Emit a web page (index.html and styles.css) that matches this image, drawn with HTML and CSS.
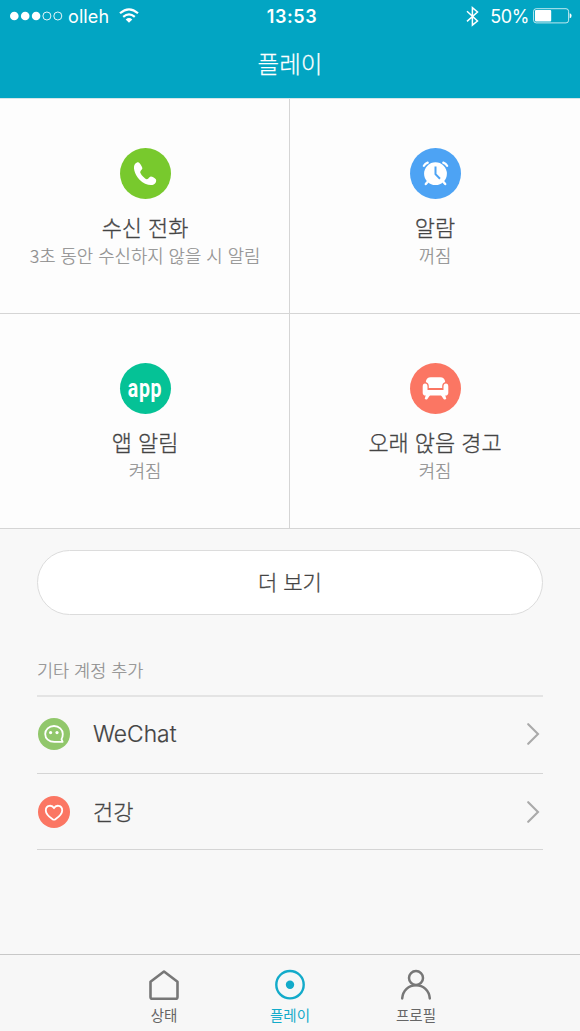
FILE: index.html
```html
<!DOCTYPE html>
<html lang="ko">
<head>
<meta charset="utf-8">
<title>플레이</title>
<link rel="stylesheet" href="styles.css">
</head>
<body>
<div class="app">
  <header class="header">
    <div class="status">
      <div class="status-left">
        <svg class="signal" width="53" height="10" viewBox="0 0 53 10"><g fill="#fff"><circle cx="4.3" cy="5" r="4.3"/><circle cx="15.2" cy="5" r="4.3"/><circle cx="26.1" cy="5" r="4.3"/></g><g fill="none" stroke="#fff" stroke-width=".9"><circle cx="36.9" cy="5" r="4"/><circle cx="47.8" cy="5" r="4"/></g></svg>
        <span class="carrier">olleh</span>
        <svg class="wifi" width="20" height="16" viewBox="0 0 20 16"><g fill="none" stroke="#fff" stroke-width="2.2"><path d="M1 5.3Q10 -2.7 19 5.3"/><path d="M4.2 8.9Q10 3.9 15.8 8.9"/></g><path d="M6.7 11.4Q10 8.6 13.3 11.4L10 14.7Z" fill="#fff"/></svg>
      </div>
      <span class="time">13:53</span>
      <div class="status-right">
        <svg width="13" height="21" viewBox="0 0 13 21"><path d="M1 5.3L11.5 15 6.4 19.2V1.7L11.5 6 1 15.4" fill="none" stroke="#fff" stroke-width="1.5"/></svg>
        <span class="percent">50%</span>
        <svg class="battery" width="39" height="16" viewBox="0 0 39 16"><rect x=".6" y=".7" width="35" height="14.2" rx="2.6" fill="none" stroke="#fff" stroke-opacity=".75"/><rect x="2" y="2.1" width="16.2" height="11.4" rx="1" fill="#fff"/><path d="M36.7 5.3Q38.6 5.6 38.6 7.8T36.7 10.3Z" fill="#fff"/></svg>
      </div>
    </div>
    <h1 class="title">플레이</h1>
  </header>

  <main class="content">
    <section class="tiles">
      <div class="tile">
        <svg class="tile-icon" viewBox="0 0 51 51"><circle cx="25.5" cy="25.5" r="25.5" fill="#78c92d"/><path d="M15 16C16.2 14.7 17.5 14.2 18.6 14.4C19.8 14.8 22 18.3 22.4 20.1C22.6 21.5 20.2 22.4 20.2 24.2C20.4 26.2 24.6 30.7 26.8 31.2C28.6 31.4 29.3 28.5 30.8 28.5C32.4 28.6 35.2 30.3 36 31.6C36.6 33.2 35.8 35.4 33.7 36.5C30.5 38 24 36.4 19.3 31.5C14.1 25.8 12.8 18.7 15 16Z" fill="#fff"/></svg>
        <h2 class="tile-title">수신 전화</h2>
        <p class="tile-note">3초 동안 수신하지 않을 시 알림</p>
      </div>
      <div class="tile">
        <svg class="tile-icon" viewBox="0 0 51 51"><circle cx="25.5" cy="25.5" r="25.5" fill="#4da3f4"/><g stroke="#fff" fill="none" stroke-linecap="round"><path d="M17.5 34L15.8 36M33.5 34L35.2 36" stroke-width="2.4"/><path d="M13.9 17.7Q15.1 15.6 17.7 14.7M33.3 14.7Q35.9 15.6 37.1 17.7" stroke-width="2.3"/></g><circle cx="25.5" cy="25.7" r="11.4" fill="#fff"/><path d="M25.5 18.5V26.2L30 30.7" fill="none" stroke="#4da3f4" stroke-width="2"/></svg>
        <h2 class="tile-title">알람</h2>
        <p class="tile-note">꺼짐</p>
      </div>
      <div class="tile">
        <div class="tile-icon app-badge"><span class="app-word">app</span></div>
        <h2 class="tile-title">앱 알림</h2>
        <p class="tile-note">켜짐</p>
      </div>
      <div class="tile">
        <svg class="tile-icon" viewBox="0 0 51 51"><circle cx="25.5" cy="25.5" r="25.5" fill="#fb7663"/><g fill="#fff"><path d="M15.8 18.9Q16.2 14.2 20.8 14.2H30.2Q34.8 14.2 35.2 18.9Q32.2 20 32.2 23V24.9H18.8V23Q18.8 20 15.8 18.9Z"/><path d="M12.7 23.5Q12.7 20.6 15 20.6Q17.5 20.6 17.5 23.5V26.9H33.5V23.5Q33.5 20.6 36 20.6Q38.3 20.6 38.3 23.5V29.8Q38.3 32.6 35.5 32.6H15.5Q12.7 32.6 12.7 29.8Z"/><path d="M15.8 32H20.2L17.2 36.2Q16 36.8 14.7 36ZM30.8 32H35.2L36.3 36Q35 36.8 33.8 36.2Z"/></g></svg>
        <h2 class="tile-title">오래 앉음 경고</h2>
        <p class="tile-note">켜짐</p>
      </div>
    </section>

    <button class="more">더 보기</button>

    <section class="accounts">
      <h3 class="accounts-heading">기타 계정 추가</h3>
      <div class="account">
        <svg class="account-icon" viewBox="0 0 32 32"><circle cx="16" cy="16" r="16" fill="#91c76b"/><path d="M24.6 23.9H16.3C10.8 23.9 7.2 20.4 7.2 15.9C7.2 11.5 11 8 16 8S24.8 11.5 24.8 15.9C24.8 18 24.3 19.8 23.5 21.1Z" fill="none" stroke="#fff" stroke-width="1.8" stroke-linejoin="round"/><circle cx="12.6" cy="14.6" r="1.6" fill="#fff"/><circle cx="19" cy="14.6" r="1.6" fill="#fff"/></svg>
        <span class="account-name latin">WeChat</span>
        <svg class="chevron" viewBox="0 0 13 22"><path d="M1.2 1.2L11 11 1.2 20.8" fill="none" stroke="#aaa" stroke-width="2.1" stroke-linecap="round"/></svg>
      </div>
      <div class="account last">
        <svg class="account-icon" viewBox="0 0 32 32"><circle cx="16" cy="16" r="16" fill="#fb7663"/><path d="M16 12.2C14.1 8.6 7.8 8.8 7.8 14.4C7.8 18.4 11.2 20.8 14.5 23.2Q16 24.2 17.5 23.2C20.8 20.8 24.2 18.4 24.2 14.4C24.2 8.8 17.9 8.6 16 12.2Z" fill="none" stroke="#fff" stroke-width="1.8" stroke-linejoin="round"/></svg>
        <span class="account-name">건강</span>
        <svg class="chevron" viewBox="0 0 13 22"><path d="M1.2 1.2L11 11 1.2 20.8" fill="none" stroke="#aaa" stroke-width="2.1" stroke-linecap="round"/></svg>
      </div>
    </section>
  </main>

  <nav class="tabs">
    <div class="tab">
      <svg class="tab-icon" viewBox="0 0 32 32"><path d="M2.5 12.7L16 2.5 29.5 12.7V28Q29.5 29.8 27.7 29.8H4.3Q2.5 29.8 2.5 28Z" fill="none" stroke="#777" stroke-width="2.6" stroke-linejoin="round"/></svg>
      <span class="tab-label">상태</span>
    </div>
    <div class="tab active">
      <svg class="tab-icon" viewBox="0 0 32 32"><circle cx="16" cy="15.7" r="13.7" fill="none" stroke="#13abca" stroke-width="2.4"/><circle cx="16" cy="15.7" r="4.2" fill="#13abca"/></svg>
      <span class="tab-label">플레이</span>
    </div>
    <div class="tab">
      <svg class="tab-icon" viewBox="0 0 32 32"><g fill="none" stroke="#777" stroke-width="2.5" stroke-linecap="round"><circle cx="16" cy="9" r="7"/><path d="M2.2 29.4C2.8 21.5 8.6 16.2 16 16.2S29.2 21.5 29.8 29.4"/></g></svg>
      <span class="tab-label">프로필</span>
    </div>
  </nav>
</div>
</body>
</html>
```
FILE: styles.css
```css
* { box-sizing: border-box; margin: 0; padding: 0; }
body { background: #f8f8f8; color: #444; font-family: "Noto Sans CJK KR", sans-serif; font-weight: 300; }
svg { display: block; flex: none; }
h1, h2, h3, p, span { white-space: nowrap; }

.app { width: 580px; height: 1031px; display: flex; flex-direction: column; overflow: hidden; }

.header { height: 98px; background: #02a5c3; color: #fff; }
.status { height: 32px; padding: 0 8px 0 10px; display: grid; grid-template-columns: 1fr auto 1fr; align-items: center; font-family: Inter, sans-serif; font-size: 18px; line-height: 32px; }
.status-left, .status-right { display: flex; align-items: center; }
.status-right { justify-content: flex-end; }
.carrier { margin: 0 10px 0 5px; letter-spacing: .1px; font-weight: 400; }
.time { font-weight: 600; letter-spacing: .6px; padding-left: 2px; }
.carrier, .time, .percent { padding-top: 1px; line-height: 31px; }
.percent { margin: 0 4px 0 11px; font-weight: 400; letter-spacing: -.4px; }
.title { text-align: center; font-size: 23.5px; font-weight: 300; line-height: 63px; -webkit-text-stroke: .25px currentColor; }

.content { flex: 1; }
.tiles { display: grid; grid-template-columns: 290px 290px; grid-auto-rows: 215px; border-top: 1px solid #d4e5e8; background: #fdfdfd; }
.tile { display: flex; flex-direction: column; align-items: center; padding-top: 49px; border-bottom: 1px solid #d5d5d5; }
.tile:nth-child(odd) { border-right: 1px solid #d5d5d5; padding-left: 1px; }
.tile-icon { width: 51px; height: 51px; }
.app-badge { border-radius: 50%; background: #05c296; display: flex; align-items: center; justify-content: center; }
.app-word { color: #fff; font: 700 25px/30px Roboto, sans-serif; letter-spacing: .8px; transform: scaleX(.78); }
.tile-title { margin-top: 12px; font-size: 21.9px; font-weight: 300; line-height: 32px; -webkit-text-stroke: .3px currentColor; }
.tile-note { font-size: 17.8px; line-height: 24px; color: #8e8e8e; -webkit-text-stroke: .2px currentColor; }

.more { display: block; width: 506px; height: 65px; margin: 21px auto 0; padding-bottom: 4px; border: 1px solid #dcdcdc; border-radius: 33px; background: #fff; color: #444; font: 300 21px/58px "Noto Sans CJK KR", sans-serif; -webkit-text-stroke: .3px currentColor; }

.accounts { width: 506px; margin: 0 auto; padding-top: 41px; }
.accounts-heading { height: 41px; font-size: 17.5px; font-weight: 300; line-height: 28px; color: #8e8e8e; border-bottom: 2px solid #e4e4e4; -webkit-text-stroke: .2px currentColor; }
.account { height: 77px; padding: 0 3px 2px 1px; display: flex; align-items: center; border-bottom: 1px solid #d5d5d5; }
.last { height: 76px; padding-bottom: 0; }
.account-icon { width: 32px; height: 32px; }
.account-name { flex: 1; margin-left: 23px; padding-bottom: 4px; font-size: 22px; line-height: 32px; -webkit-text-stroke: .3px currentColor; }
.latin { padding-bottom: 0; font-family: Inter, sans-serif; font-size: 22.8px; -webkit-text-stroke: .2px currentColor; }
.chevron { width: 13px; height: 22px; }

.tabs { height: 77px; display: flex; justify-content: center; border-top: 1px solid #c8c8c8; background: #f7f7f7; }
.tab { width: 126px; display: flex; flex-direction: column; align-items: center; padding-top: 14px; color: #666; }
.tab-icon { width: 32px; height: 32px; }
.tab-label { font-size: 14.5px; line-height: 22px; margin-top: 3px; font-weight: 400; }
.active { color: #13abca; }
```
